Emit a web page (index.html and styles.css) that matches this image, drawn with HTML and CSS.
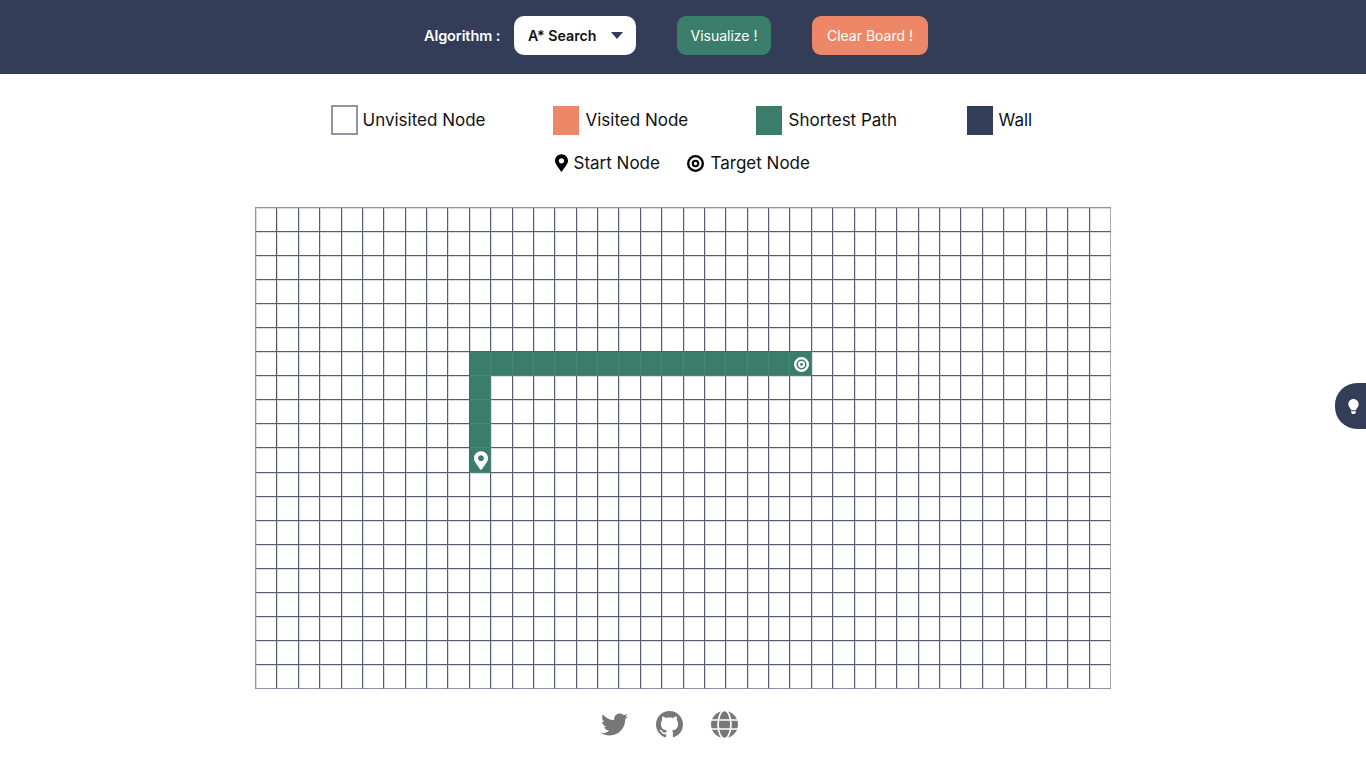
FILE: index.html
```html
<!DOCTYPE html>
<html lang="en">
<head>
<meta charset="utf-8">
<title>Pathfinding Visualizer</title>
<link rel="stylesheet" href="styles.css">
</head>
<body>
<header class="topbar">
  <span class="algo-label">Algorithm :</span>
  <div class="algo-select"><span>A* Search</span><i class="caret"></i></div>
  <button class="btn btn-green">Visualize !</button>
  <button class="btn btn-coral">Clear Board !</button>
</header>
<section class="legend">
  <div class="legend-row legend-main">
    <div class="legend-item"><i class="swatch swatch-unvisited"></i><span class="t-unvisited">Unvisited Node</span></div>
    <div class="legend-item"><i class="swatch swatch-visited"></i><span class="t-visited">Visited Node</span></div>
    <div class="legend-item"><i class="swatch swatch-path"></i><span class="t-path">Shortest Path</span></div>
    <div class="legend-item"><i class="swatch swatch-wall"></i><span class="t-wall">Wall</span></div>
  </div>
  <div class="legend-row legend-sub">
    <div class="legend-item icon-item">
      <svg class="ico-marker" viewBox="0 0 384 512"><path d="M172.268 501.67C26.97 291.031 0 269.413 0 192 0 85.961 85.961 0 192 0s192 85.961 192 192c0 77.413-26.97 99.031-172.268 309.67-9.535 13.774-29.93 13.773-39.464 0zM192 272c44.183 0 80-35.817 80-80s-35.817-80-80-80-80 35.817-80 80 35.817 80 80 80z"/></svg>
      <span class="t-start">Start Node</span>
    </div>
    <div class="legend-item icon-item">
      <svg class="ico-target" viewBox="0 0 16 16"><circle cx="8" cy="8" r="6.9" fill="none" stroke="#000" stroke-width="2.2"/><circle cx="8" cy="8" r="2.6" fill="none" stroke="#000" stroke-width="2"/></svg>
      <span class="t-target">Target Node</span>
    </div>
  </div>
</section>
<main class="board" id="board"></main>
<footer class="social">
  <svg class="soc soc-tw" viewBox="0 0 512 512"><path d="M459.37 151.716c.325 4.548.325 9.097.325 13.645 0 138.72-105.583 298.558-298.558 298.558-59.452 0-114.68-17.219-161.137-47.106 8.447.974 16.568 1.299 25.34 1.299 49.055 0 94.213-16.568 130.274-44.832-46.132-.975-84.792-31.188-98.112-72.772 6.498.974 12.995 1.624 19.818 1.624 9.421 0 18.843-1.3 27.614-3.573-48.081-9.747-84.143-51.98-84.143-102.985v-1.299c13.969 7.797 30.214 12.67 47.431 13.319-28.264-18.843-46.781-51.005-46.781-87.391 0-19.492 5.197-37.36 14.294-52.954 51.655 63.675 129.3 105.258 216.365 109.807-1.624-7.797-2.599-15.918-2.599-24.04 0-57.828 46.782-104.934 104.934-104.934 30.213 0 57.502 12.67 76.67 33.137 23.715-4.548 46.456-13.32 66.599-25.34-7.798 24.366-24.366 44.833-46.132 57.827 21.117-2.273 41.584-8.122 60.426-16.243-14.292 20.791-32.161 39.308-52.628 54.253z"/></svg>
  <svg class="soc" viewBox="0 0 16 16"><path d="M8 0C3.58 0 0 3.58 0 8c0 3.54 2.29 6.53 5.47 7.59.4.07.55-.17.55-.38 0-.19-.01-.82-.01-1.49-2.01.37-2.53-.49-2.69-.94-.09-.23-.48-.94-.82-1.13-.28-.15-.68-.52-.01-.53.63-.01 1.08.58 1.23.82.72 1.21 1.87.87 2.33.66.07-.52.28-.87.51-1.07-1.78-.2-3.64-.89-3.64-3.95 0-.87.31-1.59.82-2.15-.08-.2-.36-1.02.08-2.12 0 0 .67-.21 2.2.82.64-.18 1.32-.27 2-.27.68 0 1.36.09 2 .27 1.53-1.04 2.2-.82 2.2-.82.44 1.1.16 1.92.08 2.12.51.56.82 1.27.82 2.15 0 3.07-1.87 3.75-3.65 3.95.29.25.54.73.54 1.48 0 1.07-.01 1.93-.01 2.2 0 .21.15.46.55.38A8.013 8.013 0 0016 8c0-4.42-3.58-8-8-8z"/></svg>
  <svg class="soc" viewBox="0 0 26 26"><circle cx="13" cy="13" r="13"/><ellipse cx="13" cy="13" rx="6.2" ry="13.5" fill="none" stroke="#fff" stroke-width="1.6"/><path d="M0 8.7h26M0 17.3h26" stroke="#fff" stroke-width="1.6"/></svg>
</footer>
<aside class="hint-tab">
  <svg class="ico-bulb" viewBox="0 0 352 512"><path d="M96.06 454.35c.01 6.29 1.87 12.45 5.36 17.69l17.09 25.69a31.99 31.99 0 0 0 26.64 14.28h61.71a31.99 31.99 0 0 0 26.64-14.28l17.09-25.69a31.989 31.989 0 0 0 5.36-17.69l.04-38.35H96.01l.05 38.35zM0 176c0 44.37 16.45 84.85 43.56 115.78 16.52 18.85 42.36 58.23 52.21 91.45.04.26.07.52.11.78h160.24c.04-.26.07-.51.11-.78 9.85-33.22 35.69-72.6 52.21-91.45C335.55 260.85 352 220.37 352 176 352 78.61 272.91-.3 175.45 0 73.44.31 0 82.97 0 176z"/></svg>
</aside>
<script src="grid.js"></script>
</body>
</html>
```
FILE: grid.js
```js
var MARKER = '<svg class="cell-ico cell-marker" viewBox="0 0 384 512"><path d="M172.268 501.67C26.97 291.031 0 269.413 0 192 0 85.961 85.961 0 192 0s192 85.961 192 192c0 77.413-26.97 99.031-172.268 309.67-9.535 13.774-29.93 13.773-39.464 0zM192 272c44.183 0 80-35.817 80-80s-35.817-80-80-80-80 35.817-80 80 35.817 80 80 80z"/></svg>';
var TARGET = '<svg class="cell-ico cell-target" viewBox="0 0 16 16"><circle cx="8" cy="8" r="6.7" fill="none" stroke="#fff" stroke-width="2.6"/><circle cx="8" cy="8" r="2.6" fill="none" stroke="#fff" stroke-width="2.2"/></svg>';
var board = document.getElementById('board');
var html = '';
for (var r = 0; r < 20; r++) {
  for (var c = 0; c < 40; c++) {
    var onPath = (r === 6 && c >= 10 && c <= 25) || (c === 10 && r >= 6 && r <= 10);
    var inner = '';
    if (r === 10 && c === 10) inner = MARKER;
    if (r === 6 && c === 25) inner = TARGET;
    html += '<div class="cell' + (onPath ? ' cell-path' : '') + '">' + inner + '</div>';
  }
}
board.innerHTML = html;
```
FILE: styles.css
```css
* { box-sizing: border-box; }
html, body { margin: 0; padding: 0; background: #fff; }
body {
  height: 768px;
  overflow: hidden;
  position: relative;
  font-family: "Inter", "Liberation Sans", sans-serif;
  color: #111;
}
.topbar {
  height: 74px;
  background: #333d57;
  display: flex;
  align-items: center;
  justify-content: center;
  padding: 0 14px 3px 0;
}
.algo-label {
  color: #fff;
  font-weight: 600;
  font-size: 14.5px;
  letter-spacing: -0.1px;
  width: 77px;
  white-space: nowrap;
  margin-right: 13px;
}
.algo-select {
  width: 122px;
  height: 39px;
  background: #fff;
  border-radius: 10px;
  display: flex;
  align-items: center;
  justify-content: space-between;
  padding: 0 13px 0 14px;
  font-size: 14.2px;
  font-weight: 600;
  color: #111;
  margin-right: 41px;
}
.caret {
  width: 0;
  height: 0;
  border-left: 6.5px solid transparent;
  border-right: 6.5px solid transparent;
  border-top: 7px solid #333d57;
}
.btn {
  height: 39px;
  border: 0;
  border-radius: 9px;
  color: #fff;
  font-family: inherit;
  font-size: 14px;
  font-weight: 400;
  padding: 0;
}
.btn-green { width: 94px; background: #3a7d6b; margin-right: 41px; }
.btn-coral { width: 116px; background: #ed8768; }
.legend {
  display: flex;
  flex-direction: column;
  align-items: center;
}
.legend-row { display: flex; align-items: center; }
.legend-main { margin-top: 31px; height: 30px; gap: 68px; padding-right: 2px; }
.legend-sub { margin-top: 13px; height: 30px; gap: 28px; }
.legend-item {
  display: flex;
  align-items: center;
  font-size: 17px;
  color: #111;
  white-space: nowrap;
}
.t-unvisited { width: 122px; }
.t-visited { width: 102px; }
.t-path { width: 110px; }
.t-wall { width: 35px; }
.t-start { width: 85px; }
.t-target { width: 101px; }
.swatch { display: block; height: 29px; margin-right: 6px; }
.swatch-unvisited { width: 27px; height: 30px; border: 2px solid #8f95a5; margin-right: 5px; }
.swatch-visited { width: 26px; background: #ed8768; margin-right: 7px; }
.swatch-path { width: 26px; background: #3a7d6b; margin-right: 7px; }
.swatch-wall { width: 26px; background: #333d57; margin-right: 6px; }
.ico-marker { width: 13px; height: 18px; margin-right: 6px; }
.ico-target { width: 17px; height: 17px; margin-right: 7px; }
.board {
  margin: 29px auto 0 255px;
  width: 856px;
  height: 482px;
  display: grid;
  grid-template-columns: repeat(40, 1fr);
  grid-template-rows: repeat(20, 1fr);
  border-left: 1px solid #8d93a3;
  border-top: 1px solid #8d93a3;
}
.cell {
  border-right: 1px solid #555d73;
  border-bottom: 1px solid #555d73;
  box-shadow: inset 1px 1px 0 rgba(51, 61, 87, .18);
  min-width: 0;
  min-height: 0;
  display: flex;
  align-items: center;
  justify-content: center;
}
.cell:nth-child(40n) { border-right-color: #a3a8b5; }
.cell:nth-child(n+761) { border-bottom-color: #8d93a3; }
.cell-path { background: #3a7d6b; border-color: #4b8574; box-shadow: none; }
.cell-ico { display: block; fill: #fff; }
.cell-marker { width: 14px; height: 19px; margin-left: 2px; }
.cell-target { width: 15px; height: 15px; margin: 1px 0 0 1px; }
.social {
  display: flex;
  justify-content: center;
  gap: 28px;
  margin-top: 22px;
  padding-right: 27px;
}
.soc { width: 27px; height: 27px; fill: #777; display: block; }
.soc-tw { width: 27px; }
.hint-tab {
  position: absolute;
  right: 0;
  top: 383px;
  width: 31px;
  height: 46px;
  background: #333d57;
  border-radius: 22px 0 0 22px;
  display: flex;
  align-items: center;
  justify-content: flex-start;
  padding-left: 13px;
}
.ico-bulb { width: 11px; height: 15px; fill: #fff; }
```
